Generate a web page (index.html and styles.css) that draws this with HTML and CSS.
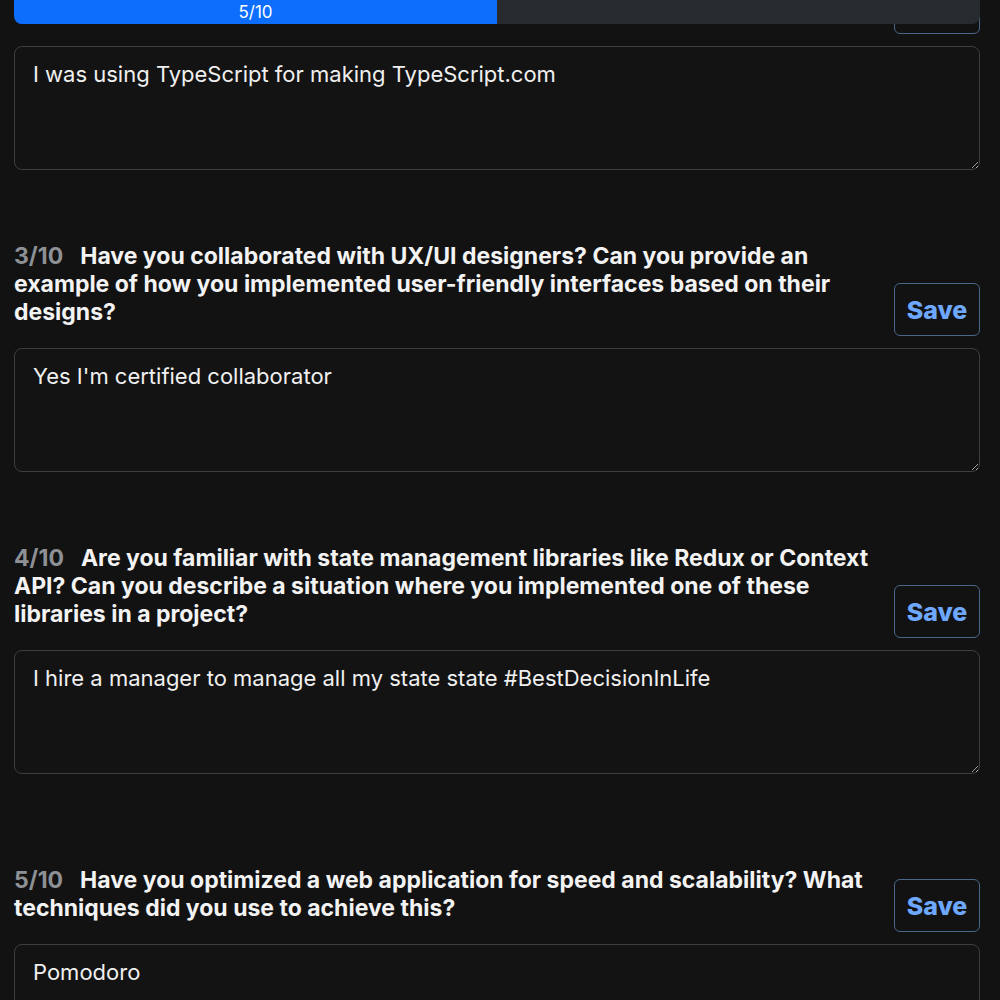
FILE: index.html
```html
<!DOCTYPE html>
<html lang="en">
<head>
<meta charset="utf-8">
<title>Interview questions</title>
<link rel="stylesheet" href="styles.css">
</head>
<body>
<div class="progress">
  <div class="progress-fill" style="width: 50%">5/10</div>
</div>
<main class="questions">
  <section class="question">
    <div class="q-head">
      <h2 class="q-title"><span class="q-num">2/10</span>What is your experience with TypeScript? Can you describe a project where you used TypeScript and the benefits it brought?</h2>
      <button class="save">Save</button>
    </div>
    <textarea class="answer" readonly>I was using TypeScript for making TypeScript.com</textarea>
  </section>
  <section class="question">
    <div class="q-head">
      <h2 class="q-title"><span class="q-num">3/10</span>Have you collaborated with UX/UI designers? Can you provide an example of how you implemented user-friendly interfaces based on their designs?</h2>
      <button class="save">Save</button>
    </div>
    <textarea class="answer" readonly>Yes I'm certified collaborator</textarea>
  </section>
  <section class="question">
    <div class="q-head">
      <h2 class="q-title"><span class="q-num">4/10</span>Are you familiar with state management libraries like Redux or Context API? Can you describe a situation where you implemented one of these libraries in a project?</h2>
      <button class="save">Save</button>
    </div>
    <textarea class="answer" readonly>I hire a manager to manage all my state state #BestDecisionInLife</textarea>
  </section>
  <section class="question">
    <div class="q-head">
      <h2 class="q-title"><span class="q-num">5/10</span>Have you optimized a web application for speed and scalability? What techniques did you use to achieve this?</h2>
      <button class="save">Save</button>
    </div>
    <textarea class="answer" readonly>Pomodoro</textarea>
  </section>
</main>
</body>
</html>
```
FILE: styles.css
```css
html, body {
  margin: 0;
  padding: 0;
  background: #121212;
  color: #f1f1f1;
  font-family: Inter, "Noto Sans", sans-serif;
}

.progress {
  position: fixed;
  top: -8px;
  left: 14px;
  right: 20px;
  height: 32px;
  background: #272a2e;
  border-radius: 8px;
  overflow: hidden;
  display: flex;
  z-index: 10;
}

.progress-fill {
  background: #0d6efd;
  color: #ffffff;
  font-size: 17px;
  display: flex;
  align-items: flex-end;
  justify-content: center;
  padding-bottom: 2px;
  box-sizing: border-box;
  height: 100%;
}

.questions {
  margin-top: -52px;
  padding: 0 20px 0 14px;
  display: flex;
  flex-direction: column;
  gap: 72px;
}

.question {
  display: flex;
  flex-direction: column;
  gap: 12px;
}

.q-head {
  display: flex;
  align-items: flex-end;
  gap: 22px;
  min-height: 86px;
}

.q-title {
  flex: 1;
  margin: 0 0 10px 0;
  font-size: 23px;
  line-height: 28px;
  font-weight: 700;
  color: #f3f3f3;
}

.q-num {
  color: #8d9095;
  margin-right: 17px;
}

.save {
  flex: none;
  width: 86px;
  height: 53px;
  background: transparent;
  border: 1px solid #4a6688;
  border-radius: 6px;
  color: #6ea8fe;
  font-family: Inter, "Noto Sans", sans-serif;
  font-size: 25px;
  font-weight: 800;
  padding: 0;
}

.answer {
  display: block;
  box-sizing: border-box;
  width: 100%;
  height: 124px;
  background: #131313;
  border: 1px solid #3e3e3e;
  border-radius: 8px;
  color: #f0f0f0;
  font-family: Inter, "Noto Sans", sans-serif;
  font-size: 22px;
  line-height: 28px;
  padding: 13px 18px;
  margin: 0;
}
```
